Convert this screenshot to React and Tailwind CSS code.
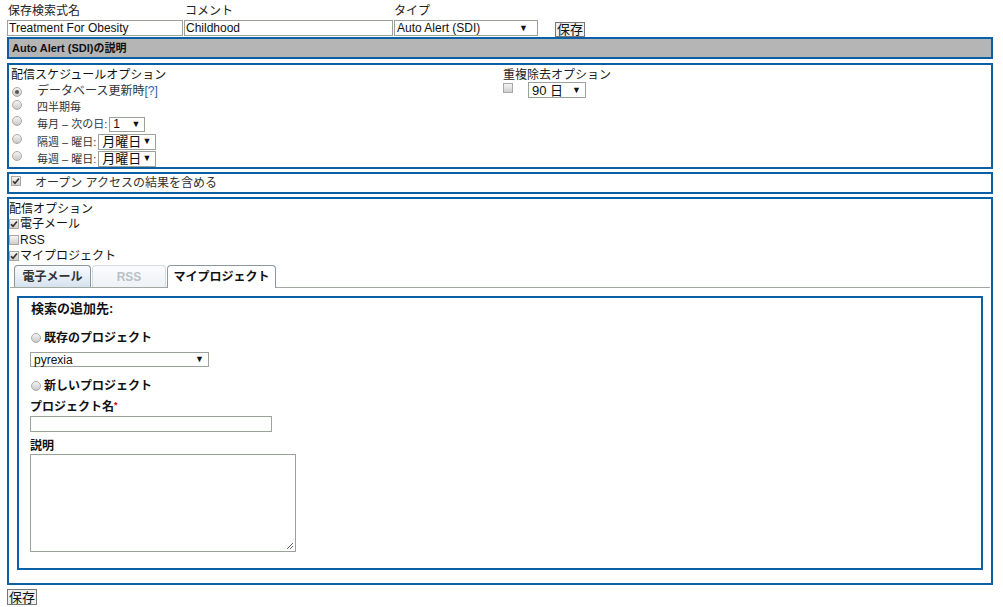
import React from "react";

const font = "font-['Liberation_Sans','Noto_Sans_CJK_JP',sans-serif]";

function Radio({ checked }) {
  return (
    <span className="inline-flex h-[10px] w-[10px] shrink-0 items-center justify-center rounded-full border border-[#a8a8a8] bg-gradient-to-b from-[#f4f4f4] to-[#c9c9c9]">
      {checked && <span className="h-[4px] w-[4px] rounded-full bg-[#555]" />}
    </span>
  );
}

function Check({ checked }) {
  return (
    <span className="inline-flex h-[10px] w-[10px] shrink-0 items-center justify-center border border-[#a8a8a8] bg-gradient-to-b from-[#f4f4f4] to-[#cfcfcf]">
      {checked && (
        <svg width="8" height="8" viewBox="0 0 8 8">
          <path d="M1 4.2 L3 6.2 L7 1.5" stroke="#333" strokeWidth="1.6" fill="none" />
        </svg>
      )}
    </span>
  );
}

function Select({ value, w, big }) {
  return (
    <span
      className={`inline-flex items-center justify-between whitespace-nowrap border border-[#9aa29a] bg-white pl-[3px] pr-[4px] text-[#111] ${w} ${
        big ? "h-[16px] text-[13px]" : "h-[15px] text-[12px]"
      }`}
    >
      <span className="leading-none">{value}</span>
      <span className="text-[9px] leading-none">▼</span>
    </span>
  );
}

function Panel({ className = "", children }) {
  return <div className={`border-2 border-[#0b5fa6] bg-white ${className}`}>{children}</div>;
}

export default function App() {
  return (
    <div className={`${font} min-h-[607px] w-[1003px] bg-white text-[12px] leading-[14px] text-[#111]`}>
      <div className="ml-[7px] w-[986px]">
        {/* labels */}
        <div className="flex h-[20px] items-end pb-[2px] leading-[14px] text-[#222]">
          <span className="w-[178px] pl-[1px]">保存検索式名</span>
          <span className="w-[209px]">コメント</span>
          <span>タイプ</span>
        </div>
        {/* inputs */}
        <div className="flex h-[16px] items-center">
          <span className="flex h-[16px] w-[176px] items-center border border-[#9aa29a] pl-[1px] leading-none">
            Treatment For Obesity
          </span>
          <span className="ml-[1px] flex h-[16px] w-[209px] items-center border border-[#9aa29a] pl-[1px] leading-none">
            Childhood
          </span>
          <span className="ml-[1px] flex h-[16px] w-[144px] items-center justify-between border border-[#9aa29a] pl-[2px] pr-[9px] leading-none">
            <span>Auto Alert (SDI)</span>
            <span className="text-[9px]">▼</span>
          </span>
          <span className="ml-[17px] mt-[2px] flex h-[15px] items-center border border-[#777] bg-[#f0f0f0] px-[1px] text-[13px] leading-none">
            保存
          </span>
        </div>
        {/* gray bar */}
        <div className="mt-[1px] flex h-[22px] items-center border-2 border-[#0b5fa6] bg-[#b5b5b5] pl-[3px] text-[11px] font-bold leading-none text-[#111]">
          Auto Alert (SDI)の説明
        </div>

        {/* schedule */}
        <Panel className="mt-[4px] h-[106px] pl-[2px] pt-[3px]">
          <div className="flex">
            <div className="w-[492px]">
              <div className="h-[15px] leading-[15px] text-[#111]">配信スケジュールオプション</div>
              <div className="flex h-[16px] items-center text-[#333]">
                <span className="ml-[1px] mt-[-3px]"><Radio checked /></span>
                <span className="ml-[15px]">データベース更新時<span className="text-[#2a5db0]">[?]</span></span>
              </div>
              <div className="flex h-[16px] items-center text-[#333]">
                <span className="ml-[1px] mt-[-3px]"><Radio /></span>
                <span className="ml-[15px] text-[11px]">四半期毎</span>
              </div>
              <div className="flex h-[18px] items-center text-[#333]">
                <span className="ml-[1px] mt-[-4px]"><Radio /></span>
                <span className="ml-[15px] text-[11px]">毎月 – 次の日:</span>
                <span className="ml-[2px]"><Select value="1" w="w-[36px]" /></span>
              </div>
              <div className="flex h-[17px] items-center text-[#333]">
                <span className="ml-[1px] mt-[-4px]"><Radio /></span>
                <span className="ml-[15px] text-[11px]">隔週 – 曜日:</span>
                <span className="ml-[2px]"><Select value="月曜日" w="w-[58px]" big /></span>
              </div>
              <div className="flex h-[17px] items-center text-[#333]">
                <span className="ml-[1px] mt-[-4px]"><Radio /></span>
                <span className="ml-[15px] text-[11px]">毎週 – 曜日:</span>
                <span className="ml-[2px]"><Select value="月曜日" w="w-[58px]" big /></span>
              </div>
            </div>
            <div>
              <div className="h-[15px] leading-[15px] text-[#222]">重複除去オプション</div>
              <div className="flex items-center">
                <span className="mt-[-4px]"><Check /></span>
                <span className="ml-[15px] mt-[-1px]"><Select value="90 日" w="w-[58px]" big /></span>
              </div>
            </div>
          </div>
        </Panel>

        {/* open access */}
        <Panel className="mt-[3px] flex h-[22px] items-center pl-[2px]">
          <span className="mt-[-4px]"><Check checked /></span>
          <span className="ml-[14px] text-[#333]">オープン アクセスの結果を含める</span>
        </Panel>

        {/* delivery */}
        <Panel className="mt-[3px] h-[388px]">
          <div className="h-[17px] pt-[3px] leading-[14px] text-[#111]">配信オプション</div>
          <div className="flex h-[16px] items-center">
            <Check checked />
            <span className="ml-[1px]">電子メール</span>
          </div>
          <div className="flex h-[16px] items-center">
            <Check />
            <span className="ml-[1px]">RSS</span>
          </div>
          <div className="flex h-[16px] items-center">
            <Check checked />
            <span className="ml-[1px]">マイプロジェクト</span>
          </div>
          {/* tabs */}
          <div className="ml-[1px] mr-[1px] mt-[2px] flex h-[22px] items-end border-b border-[#a0a8a0] pl-[4px]">
            <span className="flex h-[22px] w-[77px] items-center justify-center rounded-t-[4px] border border-b-0 border-[#8a96a2] bg-gradient-to-b from-[#fafcfe] to-[#d6e2ee] text-[12px] font-bold text-[#333]">
              電子メール
            </span>
            <span className="ml-[1px] flex h-[22px] w-[74px] items-center justify-center rounded-t-[4px] border border-b-0 border-[#d4dbe2] bg-gradient-to-b from-[#fbfcfd] to-[#eef2f6] text-[12px] font-bold text-[#b8c0c8]">
              RSS
            </span>
            <span className="mb-[-1px] ml-[1px] flex h-[23px] w-[109px] items-center justify-center rounded-t-[4px] border border-b-0 border-[#8a96a2] bg-white text-[12px] font-bold text-[#111]">
              マイプロジェクト
            </span>
          </div>
          {/* inner */}
          <div className="ml-[8px] mr-[8px] mt-[8px] h-[274px] border-2 border-[#0b5fa6] pl-[12px] leading-[14px]">
            <div className="h-[19px] pt-[3px] text-[13px] font-bold leading-[16px] text-[#111]">検索の追加先:</div>
            <div className="mt-[14px] flex h-[14px] items-center font-bold">
              <Radio />
              <span className="ml-[3px]">既存のプロジェクト</span>
            </div>
            <div className="ml-[-1px] mt-[7px] flex h-[15px]">
              <span className="inline-flex h-[15px] w-[179px] items-center justify-between border border-[#9aa29a] pl-[3px] pr-[4px] text-[12px] leading-none">
                <span>pyrexia</span>
                <span className="text-[9px]">▼</span>
              </span>
            </div>
            <div className="mt-[12px] flex h-[14px] items-center font-bold">
              <Radio />
              <span className="ml-[3px]">新しいプロジェクト</span>
            </div>
            <div className="ml-[-1px] mt-[7px] h-[14px] font-bold leading-[14px]">
              プロジェクト名<span className="align-top text-[9px] leading-[10px] text-[#d00]">*</span>
            </div>
            <div className="ml-[-1px] mt-[2px] h-[16px] w-[242px] border border-[#9aa29a]" />
            <div className="ml-[-1px] mt-[7px] h-[14px] font-bold leading-[14px]">説明</div>
            <div className="relative ml-[-1px] mt-[1px] h-[98px] w-[266px] border border-[#9aa29a]">
              <svg className="absolute bottom-[1px] right-[1px]" width="8" height="8" viewBox="0 0 8 8">
                <path d="M7 1 L1 7 M7 4 L4 7" stroke="#666" strokeWidth="1" />
              </svg>
            </div>
          </div>
        </Panel>

        {/* save */}
        <div className="mt-[4px] flex">
          <span className="inline-flex h-[16px] items-center border border-[#777] bg-[#f0f0f0] px-[1px] text-[13px] leading-none">
            保存
          </span>
        </div>
      </div>
    </div>
  );
}
